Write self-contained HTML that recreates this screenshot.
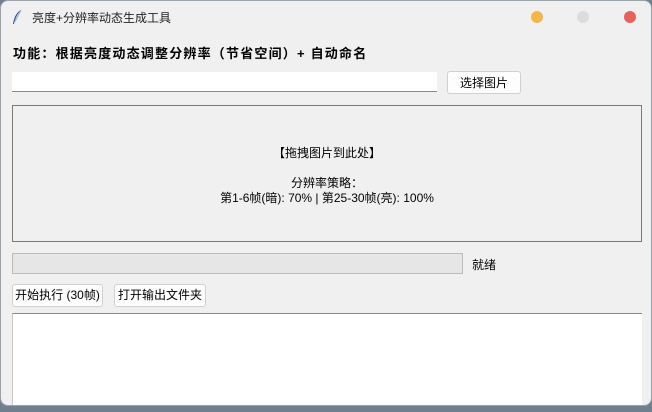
<!DOCTYPE html>
<html><head><meta charset="utf-8"><style>
*{box-sizing:border-box;margin:0;padding:0}
body{width:652px;height:412px;background:#6f7f8f;font-family:"Liberation Sans","Microsoft YaHei","Noto Sans CJK SC",sans-serif;font-size:12px;color:#000;overflow:hidden;position:relative}
.win{position:absolute;left:0;top:0;width:652px;height:406px;background:#f0f0f0;border:1px solid #9aa3ad;border-radius:8px;overflow:hidden}
.abs{position:absolute}
.dot{position:absolute;top:10px;width:12px;height:12px;border-radius:50%}
.btn{position:absolute;background:#fdfdfd;border:1px solid #d0d0d0;border-radius:3px;text-align:center;font-size:12px;line-height:20px}
</style></head><body><div class="win">
<svg class="abs" style="left:10px;top:8px" width="12" height="16" viewBox="0 0 12 16"><path d="M10 1 C6 3 3 8 2 15 L3 15 C4 9 7 4 10 1Z" fill="#2d4a8a"/><path d="M10 1 C8 5 6 9 3 14" stroke="#8fb0e0" stroke-width="1" fill="none"/></svg>
<div class="abs" style="left:31px;top:8px;font-size:12px;color:#222">亮度+分辨率动态生成工具</div>
<div class="dot" style="left:530px;background:#f3b64a"></div>
<div class="dot" style="left:576px;background:#dcdcdc"></div>
<div class="dot" style="left:623px;background:#e8615a"></div>
<div class="abs" style="left:12px;top:42px;font-size:13px;font-weight:bold;letter-spacing:1.2px">功能：根据亮度动态调整分辨率（节省空间）+ 自动命名</div>
<div class="abs" style="left:11px;top:71px;width:425px;height:20px;background:#fff;border-bottom:1px solid #8a8a8a"></div>
<div class="btn" style="left:446px;top:70px;width:74px;height:23px;line-height:22px">选择图片</div>
<div class="abs" style="left:11px;top:104px;width:630px;height:137px;border:1px solid #7a7a7a;text-align:center">
<div style="position:absolute;left:0;right:0;top:38px">【拖拽图片到此处】</div>
<div style="position:absolute;left:0;right:0;top:68px">分辨率策略：</div>
<div style="position:absolute;left:0;right:0;top:83px">第1-6帧(暗): 70% | 第25-30帧(亮): 100%</div>
</div>
<div class="abs" style="left:11px;top:252px;width:451px;height:21px;background:#e6e6e6;border:1px solid #bcbcbc"></div>
<div class="abs" style="left:471px;top:255px">就绪</div>
<div class="btn" style="left:11px;top:283px;width:91px;height:23px">开始执行 (30帧)</div>
<div class="btn" style="left:113px;top:283px;width:92px;height:23px">打开输出文件夹</div>
<div class="abs" style="left:11px;top:312px;width:630px;height:92px;background:#fff;border-top:1px solid #8a8a8a;border-left:1px solid #c8c8c8"></div>
</div></body></html>
